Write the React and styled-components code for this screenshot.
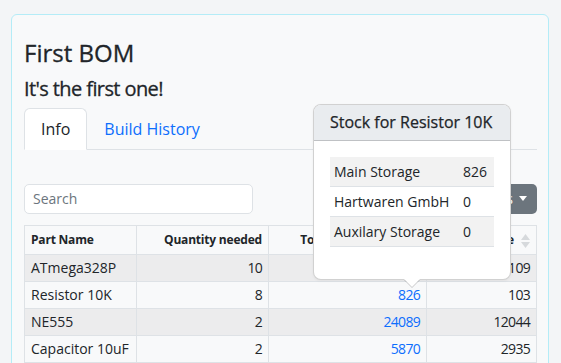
import React from 'react';
import styled, { createGlobalStyle } from 'styled-components';

const GlobalStyle = createGlobalStyle`
  body {
    margin: 0;
    background: #f3f5f7;
    font-family: "Open Sans", "Liberation Sans", sans-serif;
    color: #212529;
  }
`;

const Page = styled.div`
  padding: 14px 12px 0 11px;
  height: 363px;
  overflow: hidden;
  box-sizing: border-box;
`;

const Card = styled.div`
  position: relative;
  background: #f8f9fa;
  border: 1px solid #b4ecf7;
  border-radius: 6px;
  padding: 24px 11px 40px 12px;
`;

const Title = styled.h3`
  margin: 0 0 9px;
  font-size: 24px;
  font-weight: 500;
  line-height: 1.2;
  -webkit-text-stroke: 0.3px currentColor;
`;

const Subtitle = styled.h5`
  margin: 0 0 7px;
  font-size: 20px;
  font-weight: 500;
  line-height: 1.2;
  letter-spacing: -0.6px;
  -webkit-text-stroke: 0.3px currentColor;
`;

const Tabs = styled.div`
  display: flex;
  border-bottom: 1px solid #dee2e6;
`;

const Tab = styled.div`
  padding: 8px 16px;
  font-size: 16px;
  line-height: 24px;
  margin-bottom: -1px;
  border: 1px solid ${p => (p.$active ? '#dee2e6' : 'transparent')};
  border-bottom-color: ${p => (p.$active ? '#fff' : 'transparent')};
  border-radius: 6px 6px 0 0;
  background: ${p => (p.$active ? '#fff' : 'transparent')};
  color: ${p => (p.$active ? '#212529' : '#0d6efd')};
`;

const Toolbar = styled.div`
  display: flex;
  justify-content: space-between;
  align-items: center;
  margin-top: 34px;
  margin-bottom: 11px;
`;

const Search = styled.input`
  width: 229px;
  height: 30px;
  box-sizing: border-box;
  padding: 4px 8px;
  border: 1px solid #dee2e6;
  border-radius: 5px;
  background: #fff;
  font: inherit;
  font-size: 14px;
  &::placeholder { color: #6c757d; }
`;

const DropButton = styled.button`
  display: flex;
  align-items: center;
  gap: 6px;
  height: 30px;
  padding: 0 10px;
  border: none;
  border-radius: 5px;
  background: #6c757d;
  color: #fff;
  font: inherit;
  font-size: 14px;
  &::after {
    content: '';
    border-top: 5px solid #fff;
    border-left: 4px solid transparent;
    border-right: 4px solid transparent;
  }
`;

const Table = styled.table`
  width: 100%;
  border-collapse: collapse;
  font-size: 14px;
  table-layout: fixed;
`;

const Th = styled.th`
  position: relative;
  height: 28px;
  padding: 0 6px;
  border: 1px solid #dee2e6;
  text-align: ${p => p.$align || 'left'};
  font-size: 12px;
  font-weight: 700;
  letter-spacing: -0.2px;
  padding-right: ${p => p.$pad || '6px'};
`;

const SortIcon = styled.svg`
  position: absolute;
  right: 6px;
  top: 8px;
`;

const Row = styled.tr`
  background: ${p => (p.$odd ? '#ececed' : 'transparent')};
`;

const Td = styled.td`
  height: 26px;
  padding: 0 6px;
  border: 1px solid #dee2e6;
  text-align: ${p => (p.$num ? 'right' : 'left')};
  letter-spacing: ${p => (p.$num ? '-0.7px' : '0')};
`;

const Link = styled.span`
  color: #0d6efd;
`;

const Popover = styled.div`
  position: absolute;
  left: 301px;
  top: 89px;
  width: 198px;
  box-sizing: border-box;
  background: #fff;
  border: 1px solid rgba(0, 0, 0, 0.18);
  border-radius: 8px;
  box-shadow: 0 1px 3px rgba(0, 0, 0, 0.05);
  &::before, &::after {
    content: '';
    position: absolute;
    left: 50%;
    transform: translateX(-50%);
    border-left: 8px solid transparent;
    border-right: 8px solid transparent;
  }
  &::before {
    bottom: -9px;
    border-top: 8px solid rgba(0, 0, 0, 0.2);
  }
  &::after {
    bottom: -8px;
    border-top: 8px solid #fff;
  }
`;

const PopHeader = styled.div`
  padding: 8px 16px;
  background: #e9ecef;
  border-bottom: 1px solid rgba(0, 0, 0, 0.18);
  border-radius: 7px 7px 0 0;
  font-size: 16px;
  font-weight: 500;
  line-height: 19px;
  -webkit-text-stroke: 0.25px currentColor;
`;

const PopBody = styled.div`
  padding: 16px 16px 32px;
`;

const StockTable = styled.table`
  width: 100%;
  border-collapse: collapse;
  font-size: 14px;
`;

const StockRow = styled.tr`
  background: ${p => (p.$odd ? '#f2f2f2' : '#fff')};
  border-bottom: 1px solid #dee2e6;
`;

const StockCell = styled.td`
  height: 29px;
  padding: 0 4px;
  width: ${p => p.$w || 'auto'};
`;

const parts = [
  ['ATmega328P', 10, 41093, 4109],
  ['Resistor 10K', 8, 826, 103],
  ['NE555', 2, 24089, 12044],
  ['Capacitor 10uF', 2, 5870, 2935],
];

const stock = [
  ['Main Storage', 826],
  ['Hartwaren GmbH', 0],
  ['Auxilary Storage', 0],
];

function Sort() {
  return (
    <SortIcon width="9" height="14" viewBox="0 0 9 14">
      <path d="M4.5 0 L9 6 H0 Z" fill="#d6d9dc" />
      <path d="M4.5 14 L9 8 H0 Z" fill="#d6d9dc" />
    </SortIcon>
  );
}

export default function App() {
  return (
    <>
      <GlobalStyle />
      <Page>
        <Card>
          <Title>First BOM</Title>
          <Subtitle>It's the first one!</Subtitle>
          <Tabs>
            <Tab $active>Info</Tab>
            <Tab>Build History</Tab>
          </Tabs>
          <Toolbar>
            <Search placeholder="Search" />
            <DropButton>Columns</DropButton>
          </Toolbar>
          <Table>
            <colgroup>
              <col style={{ width: '112px' }} />
              <col style={{ width: '132px' }} />
              <col style={{ width: '158px' }} />
              <col />
            </colgroup>
            <thead>
              <tr>
                <Th>Part Name</Th>
                <Th $align="right">Quantity needed</Th>
                <Th $align="right" $pad="48px">Total in stock<Sort /></Th>
                <Th $align="right" $pad="22px">Buildable<Sort /></Th>
              </tr>
            </thead>
            <tbody>
              {parts.map(([name, qty, total, build], i) => (
                <Row key={name} $odd={i % 2 === 0}>
                  <Td>{name}</Td>
                  <Td $num>{qty}</Td>
                  <Td $num><Link>{total}</Link></Td>
                  <Td $num>{build}</Td>
                </Row>
              ))}
            </tbody>
          </Table>
          <Popover>
            <PopHeader>Stock for Resistor 10K</PopHeader>
            <PopBody>
              <StockTable>
                <tbody>
                  {stock.map(([loc, n], i) => (
                    <StockRow key={loc} $odd={i % 2 === 0}>
                      <StockCell>{loc}</StockCell>
                      <StockCell $w="27px">{n}</StockCell>
                    </StockRow>
                  ))}
                </tbody>
              </StockTable>
            </PopBody>
          </Popover>
        </Card>
      </Page>
    </>
  );
}
